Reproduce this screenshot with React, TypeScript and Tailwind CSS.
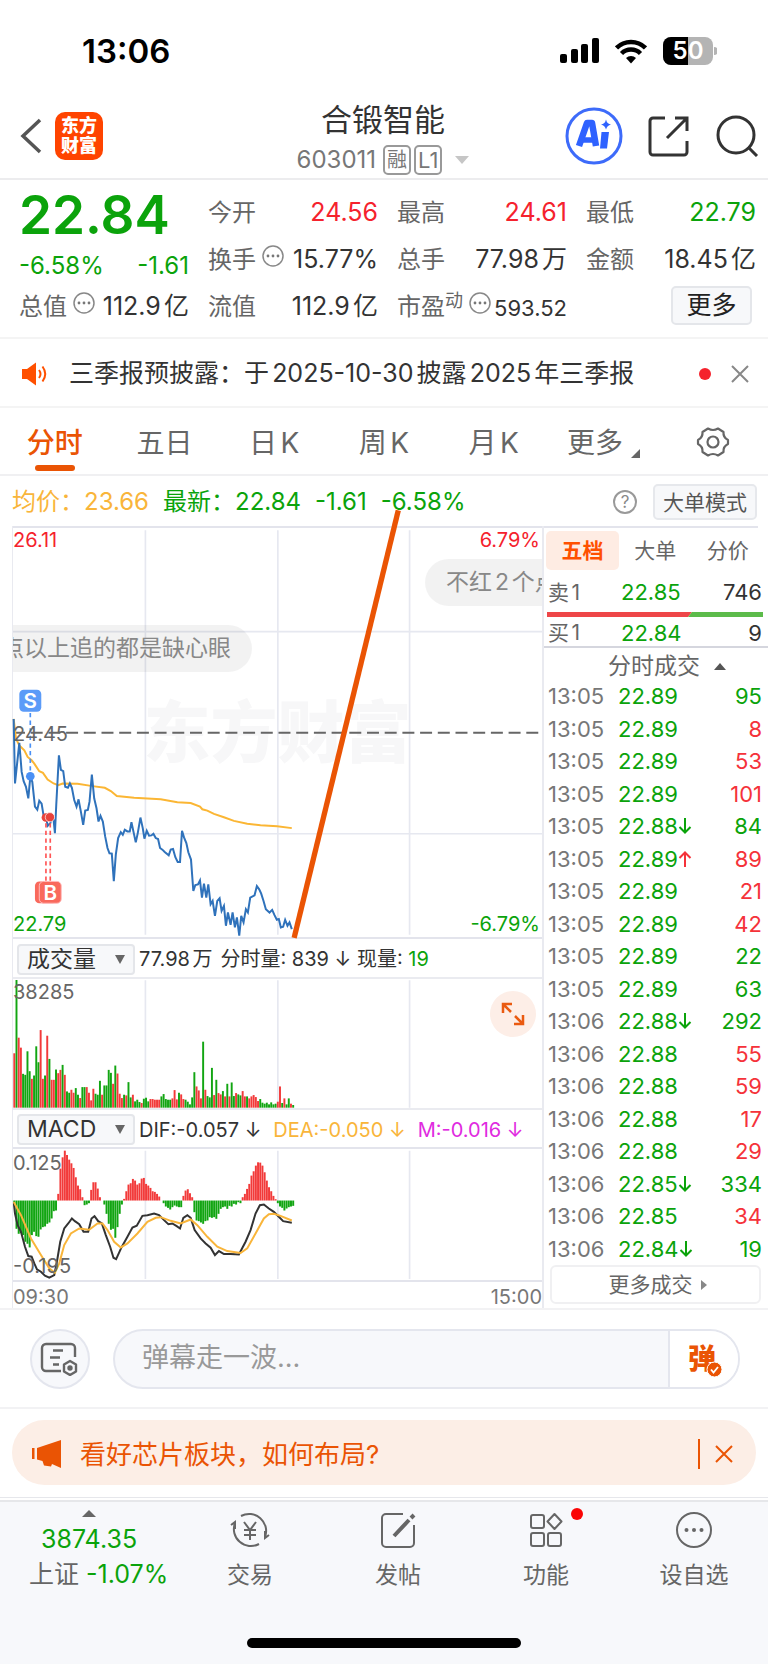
import { ReactNode, useState } from 'react';

type TradeType = {
  time: string;
  price: string;
  direction?: 'up' | 'down';
  volume: number;
  side: 'buy' | 'sell';
};

const trades: TradeType[] = [
  { time: '13:05', price: '22.89', volume: 95, side: 'sell' },
  { time: '13:05', price: '22.89', volume: 8, side: 'buy' },
  { time: '13:05', price: '22.89', volume: 53, side: 'buy' },
  { time: '13:05', price: '22.89', volume: 101, side: 'buy' },
  { time: '13:05', price: '22.88', direction: 'down', volume: 84, side: 'sell' },
  { time: '13:05', price: '22.89', direction: 'up', volume: 89, side: 'buy' },
  { time: '13:05', price: '22.89', volume: 21, side: 'buy' },
  { time: '13:05', price: '22.89', volume: 42, side: 'buy' },
  { time: '13:05', price: '22.89', volume: 22, side: 'sell' },
  { time: '13:05', price: '22.89', volume: 63, side: 'sell' },
  { time: '13:06', price: '22.88', direction: 'down', volume: 292, side: 'sell' },
  { time: '13:06', price: '22.88', volume: 55, side: 'buy' },
  { time: '13:06', price: '22.88', volume: 59, side: 'buy' },
  { time: '13:06', price: '22.88', volume: 17, side: 'buy' },
  { time: '13:06', price: '22.88', volume: 29, side: 'buy' },
  { time: '13:06', price: '22.85', direction: 'down', volume: 334, side: 'sell' },
  { time: '13:06', price: '22.85', volume: 34, side: 'buy' },
  { time: '13:06', price: '22.84', direction: 'down', volume: 19, side: 'sell' },
];

const pricePoints =
  '38,610 42,805 55,682 62,770 68,798 75,815 82,850 88,785 94,800 102,875 109,884 115,857 122,866 130,915 137,915 140,933 148,925 154,905 158,915 162,955 166,870 174,720 180,764 187,768 193,815 201,818 207,805 213,818 220,855 227,875 233,853 240,890 247,930 253,887 261,885 266,860 273,778 280,850 287,880 293,920 299,903 306,920 313,965 320,1000 326,1016 333,1017 339,1100 345,1020 352,970 360,952 366,960 372,945 380,950 387,950 392,922 399,955 405,983 411,955 419,908 426,940 431,972 438,948 445,963 452,962 458,957 465,970 472,973 478,1000 485,1005 492,1012 504,1022 510,1005 517,1003 524,1028 531,1042 538,1042 544,948 550,968 557,985 563,1013 571,1035 578,1130 584,1112 592,1110 598,1098 604,1150 610,1108 617,1150 623,1110 630,1170 636,1160 643,1205 650,1160 657,1152 663,1190 670,1175 676,1235 682,1195 690,1232 696,1195 703,1240 709,1210 716,1265 722,1205 729,1225 736,1185 742,1195 749,1150 762,1143 769,1115 776,1125 782,1138 789,1160 796,1185 807,1195 815,1187 822,1203 829,1217 835,1215 841,1240 848,1238 854,1217 861,1235 867,1225 874,1245';

const averagePoints =
  '38,610 45,670 55,690 70,705 80,725 92,735 100,745 115,768 126,773 140,793 158,805 172,810 185,805 230,806 275,813 312,818 330,828 348,843 400,848 480,853 530,862 570,864 598,875 605,883 620,887 640,897 670,907 700,918 740,927 780,931 830,934 874,940';

const difPoints =
  '38,800 42,835 50,870 60,890 72,935 82,963 92,965 100,985 108,1003 120,1010 132,1022 145,1028 160,1020 168,980 178,920 190,880 202,865 213,850 222,858 235,867 248,890 262,890 272,850 281,843 292,858 303,865 315,900 328,935 338,968 346,972 362,937 380,905 395,877 408,872 425,842 440,840 460,835 475,840 490,855 503,867 515,865 528,873 538,880 548,848 560,840 570,848 582,885 600,910 615,925 630,938 643,960 655,948 670,957 690,957 715,958 735,920 750,885 765,835 778,810 790,808 805,820 820,830 835,845 848,858 874,863';

const deaPoints =
  '38,800 60,840 90,910 120,960 145,1000 162,1013 175,985 190,930 210,895 235,880 265,884 290,865 305,865 320,885 340,920 360,937 380,925 410,895 440,860 465,848 480,846 510,857 540,865 570,853 590,870 620,905 650,935 680,948 720,954 740,940 765,895 790,850 805,837 820,836 840,842 874,856';

// One bar per minute, positive is red and negative is green
const volumeBars = [
  164, -385, 211, 181, -102, -99, -170, -110, 87, -97, -185, -137, 234, 87, -97, 217,
  -147, 84, 84, -115, 104, 114, -129, 99, -49, -45, 54, 45, -59, -39, 29, -62,
  -62, 62, 45, 22, 57, -42, -39, -81, 39, -67, -67, -114, -105, 72, -127, 103,
  42, 29, -39, 37, -77, -31, 39, -19, -24, -17, 14, -27, -30, -19, 26, 26,
  24, 24, 24, -34, -41, -26, -24, -24, 28, 53, 25, -45, 40, 26, -24, -18,
  -10, -31, -107, 64, 52, 28, -199, 54, -35, -31, -120, 38, -84, 44, 40, -50,
  34, -72, 34, -76, -35, 44, -40, -37, 50, 34, -34, 28, 34, 38, 32, 20,
  -26, -15, -12, -15, -10, -16, -10, -12, 18, 64, -14, 28, -10, -28, 12, -8,
];

const macdBars = [
  -10, -85, -100, -98, -104, -124, -130, -141, -104, -94, -107, -109, -87, -80, -78, -70,
  -66, -54, -32, -30, 20, 96, 130, 150, 137, 123, 112, 98, 70, 45, 34, 10,
  -14, -12, -8, 32, 55, 55, 36, 10, 0, -12, -40, -70, -88, -85, -112, -80,
  -40, -12, 5, 28, 48, 52, 65, 60, 48, 52, 66, 68, 50, 45, 38, 28,
  26, 20, 12, 0, -8, -18, -22, -27, -20, -15, -18, -20, -20, 14, 30, 34,
  22, 10, -35, -60, -62, -66, -70, -62, -60, -50, -52, -50, -55, -40, -25, -20,
  -18, -25, -16, -18, -10, -12, -5, -8, 10, 20, 35, 50, 75, 88, 105, 115,
  114, 105, 85, 60, 40, 28, 14, 4, -8, -18, -22, -30, -24, -20, -18, -16,
];

const StatusBar = () => (
  <div className="flex h-[94px] items-center justify-between pl-[82px] pr-[51px] pt-[8px]">
    <span className="text-[33px] font-semibold leading-none">13:06</span>
    <div className="flex items-center gap-4">
      <svg width="39" height="26" viewBox="0 0 39 26">
        <rect x="0" y="16" width="7" height="9" rx="2" />
        <rect x="11" y="11" width="7" height="14" rx="2" />
        <rect x="21" y="6" width="7" height="19" rx="2" />
        <rect x="32" y="0" width="7" height="25" rx="2" />
      </svg>
      <svg width="32" height="25" viewBox="0 0 32 25">
        <path d="M1.500 9a20.500 20.500 0 0 1 29 0M6.500 14.500a13.500 13.500 0 0 1 19 0" fill="none" stroke="#000" strokeWidth="4.500" />
        <path d="M16 24.500l-5-5.500a7.500 7.500 0 0 1 10 0z" />
      </svg>
      <svg width="54" height="28" viewBox="0 0 54 28">
        <rect width="50" height="28" rx="8" fill="#b4b4b4" />
        <path d="M8 0h17v28H8a8 8 0 0 1-8-8V8a8 8 0 0 1 8-8z" />
        <path d="M51 10a4 4 0 0 1 0 8z" fill="#b4b4b4" />
        <text x="25" y="22" textAnchor="middle" fontSize="24" fontWeight="600" fill="#fff">50</text>
      </svg>
    </div>
  </div>
);

const Header = () => (
  <header className="flex h-[86px] items-center justify-between border-b-2 border-[#ececee] pl-5 pr-[9px]">
    <div className="flex w-[181px] items-center gap-[13px]">
      <button aria-label="返回">
        <svg width="22" height="36" viewBox="0 0 22 36" fill="none" stroke="#555" strokeWidth="3.500">
          <path d="M20 2L3 18l17 16" />
        </svg>
      </button>
      <a href="#home" className="flex h-[48px] w-[48px] flex-col items-center justify-center rounded-[10px] bg-[#ff4400] text-[18px] font-black leading-[20px] text-white">
        <span>东方</span>
        <span>财富</span>
      </a>
    </div>
    <div className="flex flex-col items-center pt-[2px]">
      <h1 className="text-[31px] leading-[42px] text-[#333]">合锻智能</h1>
      <div className="flex items-center gap-[3px] pt-[3px] text-[#777]">
        <span className="pr-1 text-[24px] leading-[32px]">603011</span>
        <span className="rounded-[5px] border-2 border-[#999] px-[2px] text-[20px] leading-[26px]">融</span>
        <span className="rounded-[5px] border-2 border-[#999] px-[2px] text-[22px] leading-[26px]">L1</span>
        <svg className="ml-[10px]" width="14" height="8" viewBox="0 0 14 8" fill="#c6c6c6"><path d="M0 0h14L7 8z" /></svg>
      </div>
    </div>
    <div className="flex w-[194px] items-center justify-between">
      <button aria-label="AI">
        <svg width="58" height="58" viewBox="0 0 58 58">
          <circle cx="29" cy="29" r="27" fill="#fff" stroke="#3d6bfa" strokeWidth="3" />
          <path d="M14 39l8-23h5l4 23" fill="none" stroke="#2f62ff" strokeWidth="6.500" strokeLinejoin="round" />
          <path d="M18 33h12" stroke="#2f62ff" strokeWidth="5.500" />
          <path d="M36.500 25h7.500l-2 16.500h-7z" fill="#2f62ff" />
          <path d="M41 12.500q1 4.500 5 5q-4 1-5 5q-1-4-5-5q4-.5 5-5z" fill="#2f62ff" />
        </svg>
      </button>
      <button aria-label="分享">
        <svg width="42" height="42" viewBox="0 0 42 42" fill="none" stroke="#333" strokeWidth="3">
          <path d="M17 3H5a3 3 0 0 0-3 3v31a3 3 0 0 0 3 3h31a3 3 0 0 0 3-3V26M27 3h12v13M39 3L19 23" />
        </svg>
      </button>
      <button aria-label="搜索">
        <svg width="44" height="42" viewBox="0 0 44 42" fill="none" stroke="#333" strokeWidth="3">
          <circle cx="21" cy="20" r="18" />
          <path d="M33 32l9 9" />
        </svg>
      </button>
    </div>
  </header>
);

const InfoDot = () => (
  <svg className="mb-2 ml-[6px] shrink-0" width="22" height="22" viewBox="0 0 22 22">
    <circle cx="11" cy="11" r="10" fill="none" stroke="#888" strokeWidth="1.500" />
    <g fill="#777"><circle cx="6" cy="11" r="1.400" /><circle cx="11" cy="11" r="1.400" /><circle cx="16" cy="11" r="1.400" /></g>
  </svg>
);

type StatType = {
  label: ReactNode;
  value: string;
  className?: string;
};

const Stat = ({ label, value, className = 'text-[25px] text-[#333]' }: StatType) => (
  <div className="flex h-[47px] items-center justify-between whitespace-nowrap pt-[2px] text-[24px]">
    <span className="flex items-center text-[#666]">{label}</span>
    <span className={className}>{value}</span>
  </div>
);

const Quote = () => (
  <section className="grid grid-cols-4 gap-x-[19px] border-b-2 border-[#f4f4f4] pb-[8px] pl-[19px] pr-3 pt-[8px]">
    <div>
      <div className="flex h-[55px] items-center text-[53px] font-semibold leading-none text-[#0ba30b]">22.84</div>
      <div className="flex h-[39px] items-center justify-between pt-[6px] text-[24px] text-[#0ba30b]">
        <span>-6.58%</span>
        <span>-1.61</span>
      </div>
      <Stat label={<>总值<InfoDot /></>} value="112.9亿" />
    </div>
    <div>
      <Stat label="今开" value="24.56" className="text-[25px] text-[#f5222d]" />
      <Stat label={<>换手<InfoDot /></>} value="15.77%" />
      <Stat label="流值" value="112.9亿" />
    </div>
    <div>
      <Stat label="最高" value="24.61" className="text-[25px] text-[#f5222d]" />
      <Stat label="总手" value="77.98万" />
      <Stat label={<>市盈<span className="mb-3 text-[18px]">动</span><InfoDot /></>} value="593.52" className="pt-1 text-[22px] text-[#333]" />
    </div>
    <div>
      <Stat label="最低" value="22.79" className="text-[25px] text-[#0ba30b]" />
      <Stat label="金额" value="18.45亿" />
      <div className="flex h-[47px] items-center justify-end pr-1">
        <button className="h-[39px] w-[81px] rounded-[5px] border-2 border-[#e4e6ea] bg-[#f7f8fa] text-[25px] leading-none text-[#222]">更多</button>
      </div>
    </div>
  </section>
);

const Notice = () => (
  <div className="flex h-[69px] items-center border-b-2 border-[#f4f4f4] pl-[22px] pr-[19px] pt-[2px]">
    <svg width="27" height="24" viewBox="0 0 27 24">
      <path d="M0 7h5l9-6.500v23L5 17H0z" fill="#ff5000" />
      <path d="M17 8q3 4 0 8M20.500 4.500q5.500 7.500 0 15" fill="none" stroke="#ff5000" strokeWidth="2" />
    </svg>
    <a href="#notice" className="ml-[20px] flex-1 whitespace-nowrap text-[25px] text-[#333]">三季报预披露：于2025-10-30披露2025年三季报</a>
    <span className="mr-[20px] h-3 w-3 rounded-full bg-[#f5222d]" />
    <button aria-label="关闭公告">
      <svg width="18" height="18" viewBox="0 0 18 18" stroke="#888" strokeWidth="2"><path d="M1 1l16 16M17 1L1 17" /></svg>
    </button>
  </div>
);

const periods = ['分时', '五日', '日K', '周K', '月K', '更多'];

const PeriodTabs = () => {
  const [current, setCurrent] = useState('分时');

  return (
    <nav className="grid h-[68px] grid-cols-7 border-b-2 border-[#f0f0f2]">
      {periods.map((p) => (
        <button
          key={p}
          onClick={() => setCurrent(p)}
          className={`relative flex items-center justify-center pt-1 text-[28px] ${current === p ? 'font-medium text-[#ea5404]' : 'text-[#666]'}`}
        >
          {p}
          {p === '更多' && <svg className="ml-2 mt-5" width="9" height="9" viewBox="0 0 9 9" fill="#666"><path d="M9 0v9H0z" /></svg>}
          {current === p && <span className="absolute bottom-[3px] h-[6px] w-[40px] rounded-full bg-[#ea5404]" />}
        </button>
      ))}
      <button aria-label="设置" className="flex items-center justify-center pt-[2px]">
        <svg width="34" height="32" viewBox="0 0 34 32" fill="none" stroke="#666" strokeWidth="2.200" strokeLinejoin="round">
          <path d="M12 2.500q5 3 10 0l5.500 3.500q-.5 5.500 4.500 8v4q-5 2.500-4.500 8L22 29.500q-5-3-10 0L6.500 26q.5-5.500-4.500-8v-4q5-2.500 4.500-8z" />
          <circle cx="17" cy="16" r="5.500" />
        </svg>
      </button>
    </nav>
  );
};

const ChartInfo = () => (
  <div className="flex h-[50px] items-center justify-between pl-3 pr-[11px] pt-[2px] text-[24px]">
    <div className="flex items-center gap-[14px] text-[#0ba30b]">
      <span className="text-[#f9b53a]">均价：23.66</span>
      <span>最新：22.84</span>
      <span>-1.61</span>
      <span>-6.58%</span>
    </div>
    <div className="flex items-center gap-4">
      <button aria-label="说明" className="flex h-[24px] w-[24px] items-center justify-center rounded-full border-2 border-[#999] text-[17px] leading-none text-[#888]">?</button>
      <button className="h-[36px] w-[104px] rounded-[5px] border-2 border-[#e6e8ec] bg-[#f7f8fa] text-[21px] leading-none text-[#555]">大单模式</button>
    </div>
  </div>
);

const PriceChart = () => (
  <div className="relative h-[413px] border-b-2 border-t-2 border-[#e3e4ec] text-[20px] leading-none">
    <div className="absolute inset-0 flex items-center justify-center text-[67px] font-black text-[#f7f7f8]">东方财富</div>
    <svg className="absolute inset-0 h-full w-full overflow-visible" viewBox="36 33 1590 1236" preserveAspectRatio="none" fill="none">
      <path d="M434 40v1222M832 40v1222M1228 40v1222M36 346h1590M36 957h1590" stroke="#e6e8f0" strokeWidth="5" />
      <path d="M36 652h1590" stroke="#666" strokeWidth="6" strokeDasharray="36 17.200" />
      <polyline points={averagePoints} stroke="#fbb634" strokeWidth="6" />
      <polyline points={pricePoints} stroke="#2f72bb" strokeWidth="6" />
      <path d="M88 592v190" stroke="#4a90f5" strokeWidth="5" strokeDasharray="13 10" />
      <circle cx="88" cy="783" r="13" fill="#4a90f5" />
      <rect x="55" y="522" width="66" height="66" rx="13" fill="#5b9bf8" />
      <path d="M135 925v178M148 925v178" stroke="#f55" strokeWidth="5" strokeDasharray="13 10" />
      <circle cx="135" cy="908" r="13" fill="#e8423c" />
      <circle cx="147" cy="907" r="14" fill="#e8423c" stroke="#fff" strokeWidth="2" />
      <rect x="102" y="1101" width="66" height="66" rx="13" fill="#f9695c" />
      <rect x="115" y="1101" width="66" height="66" rx="13" fill="#f9695c" stroke="#fbb" strokeWidth="3" />
      <g fill="#fff" fontSize="62" fontWeight="600" textAnchor="middle">
        <text x="88" y="577">S</text>
        <text x="148" y="1156">B</text>
      </g>
    </svg>
    <div className="absolute inset-0 overflow-hidden text-[23px] leading-[47px] text-[#888]">
      <div className="absolute right-[290px] top-[97px] h-[47px] whitespace-nowrap rounded-full bg-black/5 px-[21px]">点以上追的都是缺心眼</div>
      <div className="absolute left-[412px] top-[31px] h-[47px] whitespace-nowrap rounded-full bg-black/5 px-[21px]">不红2个点</div>
    </div>
    <span className="absolute left-0 top-[2px] text-[#f5222d]">26.11</span>
    <span className="absolute right-[2px] top-[2px] text-[#f5222d]">6.79%</span>
    <span className="absolute left-0 top-[196px] text-[#666]">24.45</span>
    <span className="absolute bottom-[3px] left-0 text-[#0ba30b]">22.79</span>
    <span className="absolute bottom-[3px] right-[2px] text-[#0ba30b]">-6.79%</span>
    <svg className="pointer-events-none absolute inset-0 h-full w-full overflow-visible" viewBox="36 33 1590 1236" preserveAspectRatio="none">
      <path d="M1194-20L881 1272" stroke="#ea5404" strokeWidth="16" />
    </svg>
  </div>
);

type IndicatorSelectType = {
  label: string;
  options: string[];
};

const IndicatorSelect = ({ label, options }: IndicatorSelectType) => (
  <div className="relative ml-1 mr-1 w-[118px] shrink-0">
    <select aria-label={label} className="h-[31px] w-full appearance-none rounded-[4px] border-2 border-[#e4e6ea] bg-[#f7f8fa] pl-2 text-[23px] leading-none text-[#333]">
      {options.map((o) => <option key={o}>{o}</option>)}
    </select>
    <svg className="pointer-events-none absolute right-[10px] top-[11px]" width="10" height="9" viewBox="0 0 10 9" fill="#666"><path d="M0 0h10L5 9z" /></svg>
  </div>
);

const VolumeChart = () => (
  <div className="relative h-[133px] border-b-2 border-t-2 border-[#eaebf0]">
    <svg className="absolute inset-0 h-full w-full" viewBox="36 129 1590 389" preserveAspectRatio="none">
      <path d="M434 133v384M832 133v384M1228 133v384" stroke="#e6e8f0" strokeWidth="5" />
      {volumeBars.map((v, i) => (
        <rect key={i} x={37 + i * 6.6} y={517 - Math.abs(v)} width="5.800" height={Math.abs(v)} fill={v > 0 ? '#f23a3a' : '#12a512'} />
      ))}
    </svg>
    <span className="absolute left-0 top-[3px] text-[20px] leading-none text-[#666]">38285</span>
    <button aria-label="全屏" className="absolute right-[6px] top-[12px] flex h-[46px] w-[46px] items-center justify-center rounded-full bg-[#fdeee7]">
      <svg width="24" height="24" viewBox="0 0 24 24" fill="none" stroke="#ea5a10" strokeWidth="2.500">
        <path d="M2 11V2h9M2 2l8 8M22 13v9h-9M22 22l-8-8" />
      </svg>
    </button>
  </div>
);

const MacdChart = () => (
  <div className="relative h-[135px] border-b-2 border-t-2 border-[#e3e4ec] text-[20px] leading-none text-[#666]">
    <svg className="absolute inset-0 h-full w-full" viewBox="36 641 1590 394" preserveAspectRatio="none" fill="none">
      <path d="M434 646v386M832 646v386M1228 646v386" stroke="#e6e8f0" strokeWidth="5" />
      {macdBars.map((v, i) => (
        <rect key={i} x={37 + i * 6.6} y={v > 0 ? 796 - v : 796} width="5.900" height={Math.abs(v)} fill={v > 0 ? '#f23a3a' : '#12a512'} />
      ))}
      <polyline points={difPoints} stroke="#333" strokeWidth="6" />
      <polyline points={deaPoints} stroke="#f9b53a" strokeWidth="6" />
    </svg>
    <span className="absolute left-0 top-[4px]">0.125</span>
    <span className="absolute bottom-[4px] left-0">-0.195</span>
  </div>
);

const Charts = () => (
  <div className="min-w-0 flex-1 border-r-2 border-[#e9eaf0]">
    <div className="border-l border-[#e9eaf0]">
      <PriceChart />
      <div className="flex h-[38px] items-center whitespace-nowrap pt-[2px] text-[20px] text-[#333]">
        <IndicatorSelect label="副图指标一" options={['成交量', '成交额']} />
        <span>77.98万</span>
        <span className="ml-2">分时量: 839 ↓ 现量: <span className="text-[#0ba30b]">19</span></span>
      </div>
      <VolumeChart />
      <div className="flex h-[37px] items-center whitespace-nowrap pt-[2px] text-[20px] text-[#333]">
        <IndicatorSelect label="副图指标二" options={['MACD', 'KDJ']} />
        <span>DIF:-0.057 ↓</span>
        <span className="ml-3 text-[#f9b53a]">DEA:-0.050 ↓</span>
        <span className="ml-3 text-[#e02be0]">M:-0.016 ↓</span>
      </div>
      <MacdChart />
      <div className="flex h-[26px] items-center justify-between pt-1 text-[20px] leading-none text-[#777]">
        <span>09:30</span>
        <span>15:00</span>
      </div>
    </div>
  </div>
);

const OrderBook = () => (
  <aside className="flex w-[224px] shrink-0 flex-col text-[22px]">
    <div className="mr-[10px] border-t-2 border-[#e3e4ec]" />
    <div className="mt-[3px] flex h-[39px] pl-[2px] pr-1 text-[21px] text-[#666]">
      <button className="w-[73px] rounded-[5px] bg-[#feece3] font-bold text-[#ff5000]">五档</button>
      <button className="flex-1">大单</button>
      <button className="flex-1">分价</button>
    </div>
    <div className="mt-[5px] flex h-[35px] items-center pl-1 pr-[6px] text-[#333]">
      <span className="w-[73px] text-[21px] text-[#666]">卖1</span>
      <span className="flex-1 text-[#0ba30b]">22.85</span>
      <span>746</span>
    </div>
    <svg className="ml-[3px] mt-[2px] h-[5px] w-[216px]" viewBox="0 0 216 5">
      <path d="M0 0h145l-4 5H0z" fill="#ee4648" />
      <path d="M145 0h71v5h-75z" fill="#5cbb4a" />
    </svg>
    <div className="flex h-[31px] items-center border-b-2 border-[#d5d6de] pl-1 pr-[6px] pt-[2px] leading-none text-[#333]">
      <span className="w-[73px] text-[21px] text-[#666]">买1</span>
      <span className="flex-1 text-[#0ba30b]">22.84</span>
      <span>9</span>
    </div>
    <button className="flex h-[32px] items-center justify-center gap-[14px] pl-[22px] pt-1 text-[23px] leading-none text-[#666]">
      分时成交
      <svg width="12" height="7" viewBox="0 0 12 7" fill="#555"><path d="M0 7h12L6 0z" /></svg>
    </button>
    <table className="h-[585px] w-full leading-none">
      <tbody>
        {trades.map((t, index) => (
          <tr key={index}>
            <td className="w-[74px] pl-1 text-[#777]">{t.time}</td>
            <td className="text-[#0ba30b]">
              {t.price}
              {t.direction === 'down' && <Arrow />}
              {t.direction === 'up' && <Arrow up />}
            </td>
            <td className={`pr-[6px] text-right ${t.side === 'buy' ? 'text-[#f5323a]' : 'text-[#0ba30b]'}`}>{t.volume}</td>
          </tr>
        ))}
      </tbody>
    </table>
    <button className="ml-[6px] mr-[7px] flex h-[39px] items-center justify-center gap-2 rounded-[6px] border-2 border-[#f0f0f2] pl-1 text-[21px] leading-none text-[#666]">
      更多成交
      <svg width="6" height="10" viewBox="0 0 6 10" fill="#888"><path d="M0 0l6 5-6 5z" /></svg>
    </button>
  </aside>
);

const Arrow = ({ up }: { up?: boolean }) => (
  <svg className="inline align-baseline" width="14" height="16" viewBox="0 0 14 16" fill="none" stroke={up ? '#f5323a' : '#0ba30b'} strokeWidth="2">
    <path d={up ? 'M7 16V1M1.500 7L7 1.500 12.500 7' : 'M7 0v15M1.500 9L7 14.500 12.500 9'} />
  </svg>
);

const CommentBar = () => (
  <div className="flex h-[101px] items-center border-b-2 border-t-2 border-[#f2f2f4] pl-[30px] pr-[28px]">
    <button aria-label="弹幕设置" className="flex h-[60px] w-[60px] items-center justify-center rounded-full border-2 border-[#e4e6ee] bg-[#f7f8fb]">
      <svg className="mr-[2px]" width="38" height="34" viewBox="0 0 38 34" fill="none" stroke="#666" strokeWidth="2.400" strokeLinejoin="round">
        <path d="M21 29H6a4 4 0 0 1-4-4V6a4 4 0 0 1 4-4h25a4 4 0 0 1 4 4v9M13 8.500h10M10 15.500h10M13 22.500h6" />
        <path d="M30 19l6 3.500v7L30 33l-6-3.500v-7z" />
        <circle cx="30" cy="26" r="1.500" fill="#666" />
      </svg>
    </button>
    <div className="ml-[23px] flex h-[60px] flex-1 overflow-hidden rounded-full border-2 border-[#e4e6ee] bg-[#f7f8fb]">
      <input aria-label="弹幕" placeholder="弹幕走一波..." className="min-w-0 flex-1 bg-transparent pl-[27px] text-[27px] outline-none placeholder:text-[#999]" />
      <button aria-label="弹幕开关" className="relative w-[70px] border-l-2 border-[#e4e6ee] bg-white pr-1 text-[28px] font-black leading-none text-[#ea5404]">
        弹
        <svg className="absolute bottom-[9px] right-[15px]" width="17" height="17" viewBox="0 0 17 17">
          <circle cx="8.500" cy="8.500" r="7.500" fill="#ea5404" stroke="#fff" />
          <path d="M5 8.500l2.500 3L12 6" fill="none" stroke="#fff" strokeWidth="1.800" />
        </svg>
      </button>
    </div>
  </div>
);

const Banner = () => (
  <div className="px-[12px] pb-[12px] pt-[11px]">
    <div className="flex h-[65px] items-center rounded-full bg-[#fceee6] pl-[20px] pr-[23px] pt-[2px] text-[#ea5404]">
      <svg width="30" height="28" viewBox="0 0 30 28" fill="#ea5404">
        <path d="M0 8h2.500v11H0zM5 8L29 0v28l-9-4-1 2.500-7-1-1.500-4.500L5 19.500z" />
      </svg>
      <a href="#topic" className="ml-[18px] flex-1 pt-[2px] text-[26px]">看好芯片板块，如何布局?</a>
      <span className="mr-[15px] h-[30px] w-[2px] bg-[#ea5404]" />
      <button aria-label="关闭">
        <svg width="18" height="18" viewBox="0 0 18 18" stroke="#ea5404" strokeWidth="2"><path d="M1 1l16 16M17 1L1 17" /></svg>
      </button>
    </div>
  </div>
);

type FooterItemType = {
  label: string;
  badge?: boolean;
  children: ReactNode;
};

const FooterItem = ({ label, badge, children }: FooterItemType) => (
  <button className="relative flex flex-1 flex-col items-center pt-[9px] text-[23px] leading-[30px] text-[#666]">
    <svg width="40" height="38" viewBox="0 0 40 38" fill="none" stroke="#666" strokeWidth="2">{children}</svg>
    <span className="mt-[11px]">{label}</span>
    {badge && <span className="absolute left-1/2 top-[6px] ml-[25px] h-3 w-3 rounded-full bg-[#fa0505]" />}
  </button>
);

const Footer = () => (
  <footer className="border-t border-[#e6e7eb] pt-[2px]">
    <div className="h-[164px] border-t-2 border-[#e6e7ea] bg-[#f7f8fb]">
      <div className="flex h-[136px] pl-[10px]">
        <button className="flex w-[166px] flex-col items-start pl-[19px] pt-[8px] text-[25px] leading-[35px] text-[#0ba30b]">
          <svg className="ml-[53px]" width="14" height="7" viewBox="0 0 14 7" fill="#666"><path d="M0 7h14L7 0z" /></svg>
          <span className="ml-3 mt-[5px]">3874.35</span>
          <span className="whitespace-nowrap"><span className="text-[#666]">上证</span> -1.07%</span>
        </button>
        <FooterItem label="交易">
          <path d="M11 5a17 17 0 0 1 24 21M29 33A17 17 0 0 1 5 12M1 14l4-3v7M39 24l-4 3v-7" />
          <path d="M14 11l6 8 6-8M20 19v10M14 19h12M14 24h12" />
        </FooterItem>
        <FooterItem label="发帖">
          <path d="M25 3H8a4 4 0 0 0-4 4v25a4 4 0 0 0 4 4h24a4 4 0 0 0 4-4V14" />
          <path d="M16 25L31 9M33 7l3-3" strokeWidth="4" />
        </FooterItem>
        <FooterItem label="功能" badge>
          <rect x="5" y="4" width="13" height="13" rx="2" />
          <rect x="5" y="22" width="13" height="13" rx="2" />
          <rect x="22" y="22" width="13" height="13" rx="2" />
          <path d="M28.500 3l7 7.500-7 7.500-7-7.500z" strokeLinejoin="round" />
        </FooterItem>
        <FooterItem label="设自选">
          <circle cx="20" cy="19" r="17" />
          <g fill="#666" stroke="none"><circle cx="12.500" cy="19" r="2" /><circle cx="20" cy="19" r="2" /><circle cx="27.500" cy="19" r="2" /></g>
        </FooterItem>
      </div>
      <div className="mx-auto h-[10px] w-[274px] rounded-full bg-black" />
    </div>
  </footer>
);

const App = () => {
  return (
    <div className="w-full bg-white font-['Inter','Noto_Sans_CJK_SC',sans-serif] text-black [text-autospace:normal]">
      <StatusBar />
      <Header />
      <Quote />
      <Notice />
      <PeriodTabs />
      <ChartInfo />
      <main className="flex pl-[12px]">
        <Charts />
        <OrderBook />
      </main>
      <CommentBar />
      <Banner />
      <Footer />
    </div>
  );
};

export default App;
